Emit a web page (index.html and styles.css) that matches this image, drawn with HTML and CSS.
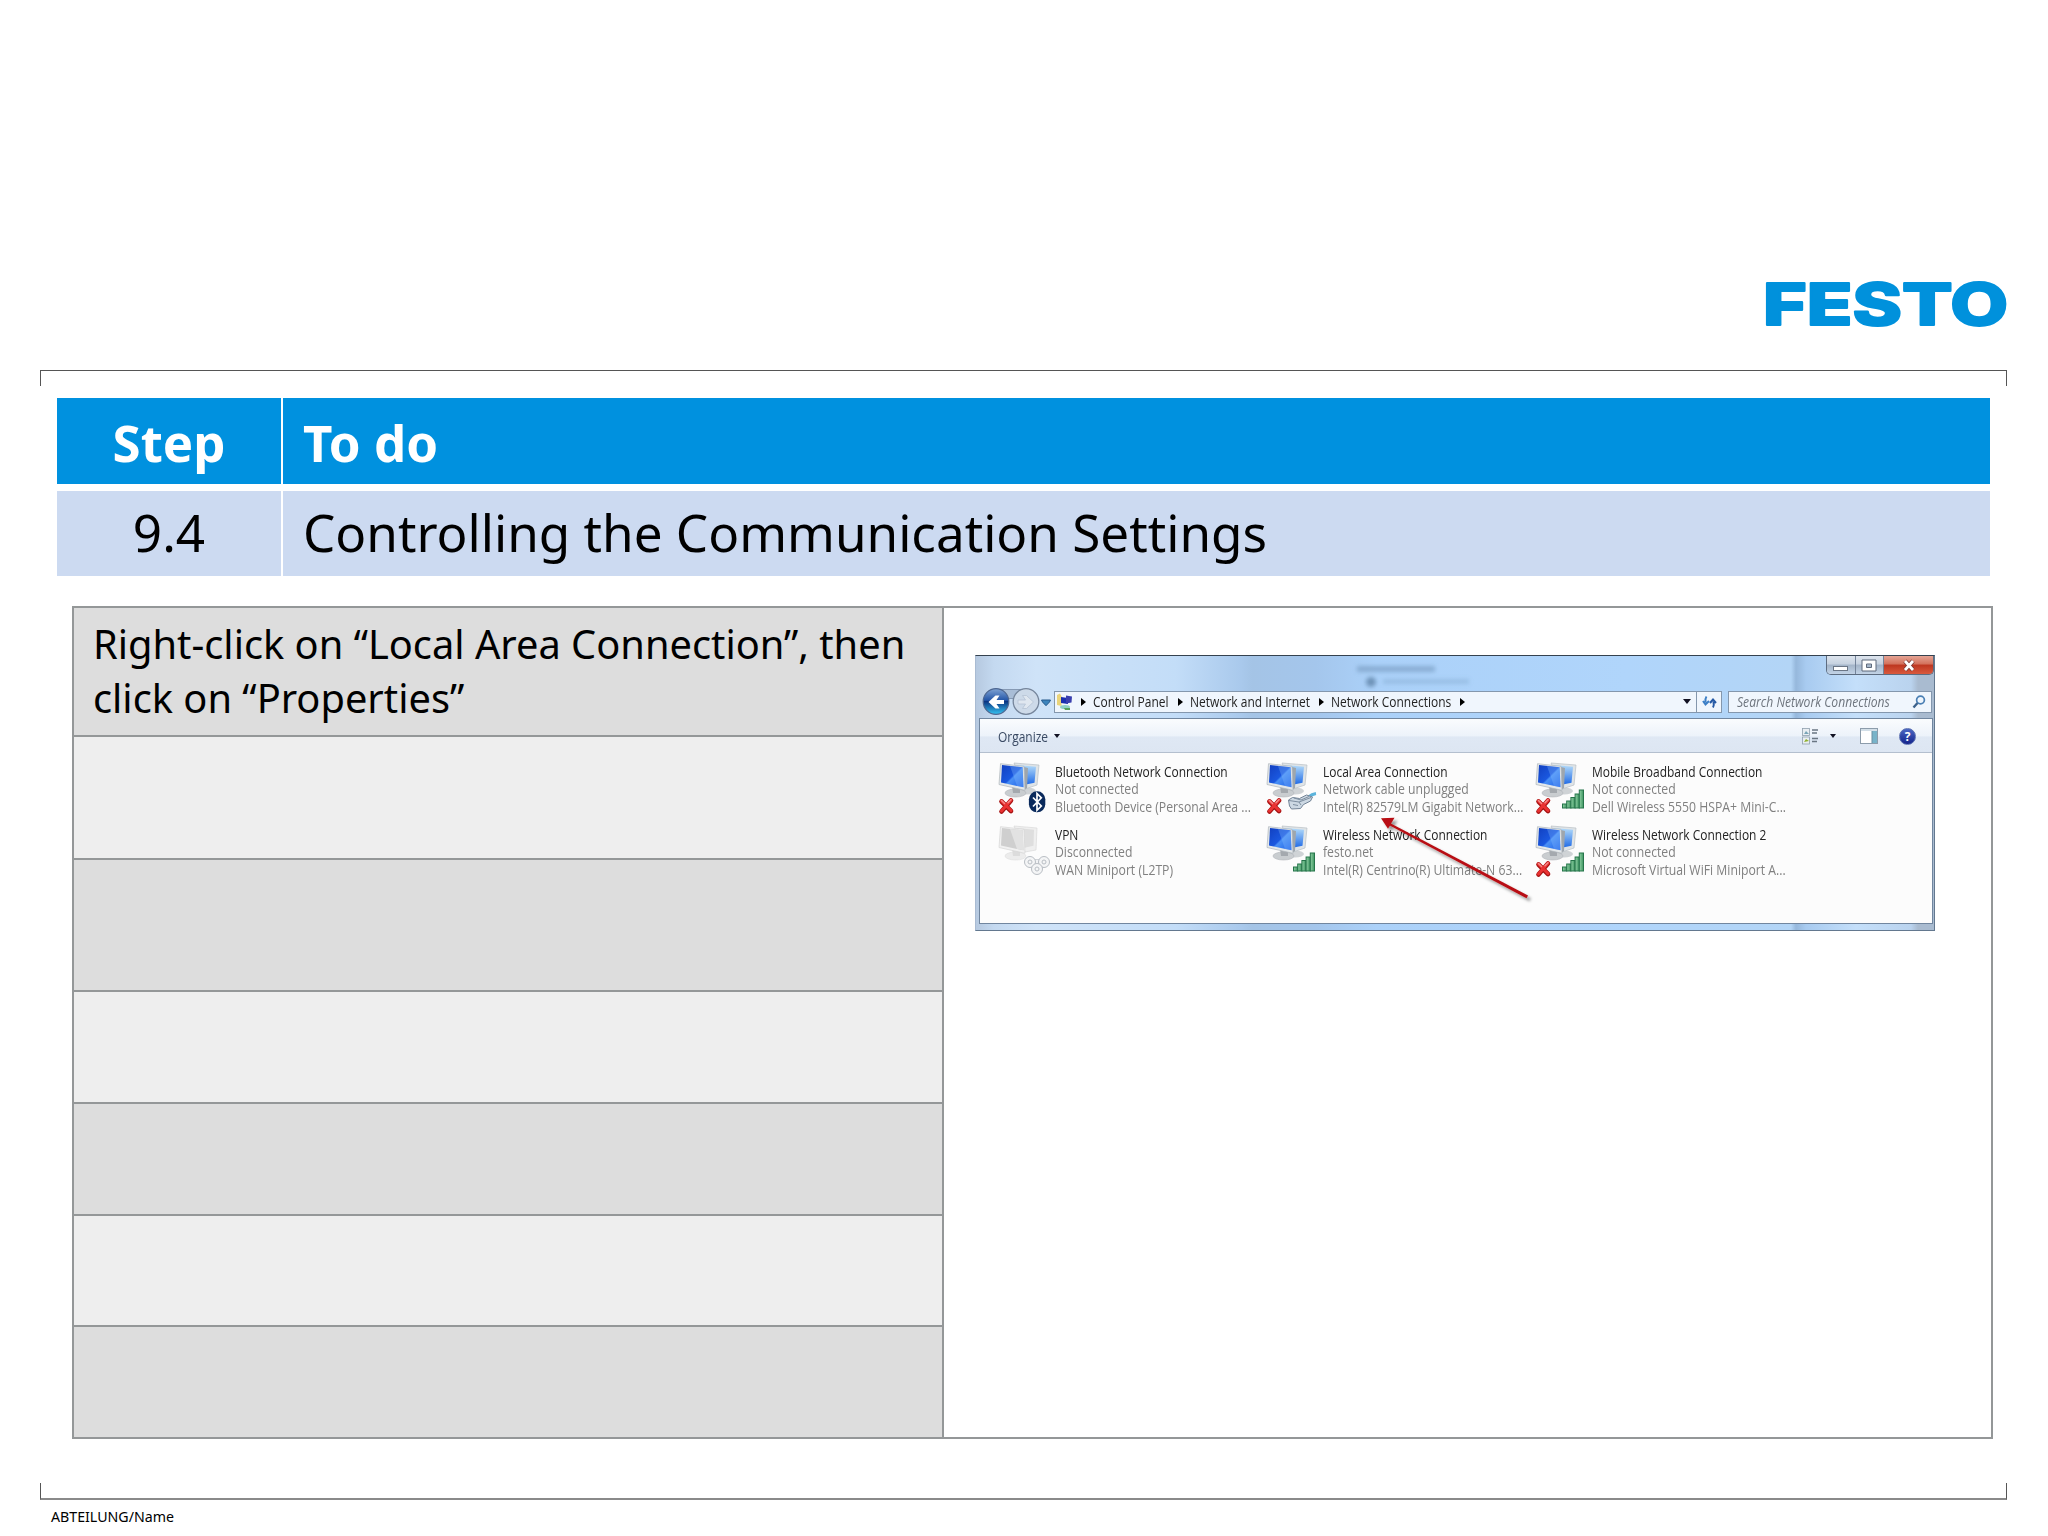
FILE: index.html
```
<!DOCTYPE html>
<html lang="en">
<head>
    <meta charset="UTF-8">
    <title>9.4 Controlling the Communication Settings</title>
    <link rel="stylesheet" href="styles.css">
</head>
<body>
    <!-- Shared icon shapes -->
    <svg class="defs" width="0" height="0">
        <defs>
            <linearGradient id="screen" x1="0" y1="0" x2="1" y2="1">
                <stop offset="0" stop-color="#1240c0"/>
                <stop offset="0.5" stop-color="#1a58e0"/>
                <stop offset="0.55" stop-color="#4a90f5"/>
                <stop offset="1" stop-color="#1c60e8"/>
            </linearGradient>
            <linearGradient id="screen-back" x1="0" y1="0" x2="0" y2="1">
                <stop offset="0" stop-color="#b4dcfa"/>
                <stop offset="1" stop-color="#1f6ae6"/>
            </linearGradient>
            <linearGradient id="back-btn" x1="0" y1="0" x2="0" y2="1">
                <stop offset="0" stop-color="#7fa3d4"/>
                <stop offset="0.45" stop-color="#2456a8"/>
                <stop offset="0.5" stop-color="#0b3582"/>
                <stop offset="1" stop-color="#35c4f2"/>
            </linearGradient>
            <linearGradient id="bar" x1="0" y1="0" x2="1" y2="0">
                <stop offset="0" stop-color="#8fd0a4"/>
                <stop offset="1" stop-color="#3d9560"/>
            </linearGradient>
            <filter id="shadow" x="-10%" y="-10%" width="120%" height="130%">
                <feDropShadow dx="3" dy="3" stdDeviation="1.6" flood-color="#000" flood-opacity="0.4"/>
            </filter>
            <filter id="glass" x="-20%" y="-50%" width="140%" height="200%">
                <feGaussianBlur stdDeviation="2"/>
            </filter>
            <symbol id="pc" viewBox="0 0 56 54">
                <ellipse cx="30" cy="30" rx="9" ry="3.5" fill="#cfd3d6"/>
                <ellipse cx="18.5" cy="32" rx="10.5" ry="4" fill="#c9cdd0" stroke="#b0b4b8" stroke-width=".6"/>
                <path d="M15 25l8 2v5h-7z" fill="#a4a9ae"/>
                <path d="M17 2l25 2-2 20-12 4z" fill="#dfe4e7" stroke="#b9c0c5" stroke-width=".7"/>
                <path d="M20 4l19 1.7-1.5 16-10 2z" fill="url(#screen-back)"/>
                <path d="M27 6l4 1-1 20-3 2z" fill="#9ea6ad"/>
                <path d="M3.500 2.700l23.500 2.600 1 24L2 23.500z" fill="#e4e8ea" stroke="#aeb5ba" stroke-width=".7"/>
                <path d="M5 4l20.700 2.300.8 20L4 21.500z" fill="url(#screen)"/>
                <path d="M13 5l12.700 1.300.8 20L20 25z" fill="#8fc3ff" opacity=".3"/>
            </symbol>
            <symbol id="pc-off" viewBox="0 0 56 54">
                <ellipse cx="18.5" cy="32" rx="10.5" ry="4" fill="#ececec" stroke="#dedede" stroke-width=".6"/>
                <path d="M15 25l8 2v5h-7z" fill="#dcdcdc"/>
                <path d="M17 2l23 2-1 22-11 2z" fill="#efefef" stroke="#dadada" stroke-width=".7"/>
                <path d="M20 4l17 1.700-.5 16-9 2z" fill="#dedede"/>
                <path d="M3.500 2.700l23.500 2.600 1 24L2 23.500z" fill="#f1f1f1" stroke="#d6d6d6" stroke-width=".7"/>
                <path d="M5 4l20.700 2.300.8 20L4 21.500z" fill="#cfcfcf"/>
                <path d="M13 5l12.700 1.300.8 20L20 25z" fill="#e2e2e2"/>
            </symbol>
            <symbol id="cross" viewBox="0 0 56 54">
                <path d="M4.500 40.500L14 50M14 39.500L4.500 50.500" stroke="#a51212" stroke-width="4.600" stroke-linecap="round"/>
                <path d="M4.500 40L14 49.500M14 39L4.500 50" stroke="#ea3232" stroke-width="3" stroke-linecap="round"/>
                <path d="M4.500 39.500l3 3M14 38.700l-3 3" stroke="#f58a8a" stroke-width="1.500" stroke-linecap="round"/>
            </symbol>
            <symbol id="signal" viewBox="0 0 56 54">
                <g fill="url(#bar)" stroke="#25744a" stroke-width="1">
                    <rect x="28.5" y="43" width="4.200" height="4"/>
                    <rect x="32.7" y="40" width="4.200" height="7"/>
                    <rect x="36.9" y="36.500" width="4.200" height="10.500"/>
                    <rect x="41.1" y="33" width="4.200" height="14"/>
                    <rect x="45.3" y="29" width="4.200" height="18"/>
                </g>
            </symbol>
            <symbol id="bluetooth" viewBox="0 0 56 54">
                <rect x="31.900" y="30.300" width="16.400" height="21" rx="8" fill="#0a2a5c"/>
                <path d="M36 36.500l8.300 8.500-4.300 4.300V32.500l4.300 4.300L36 45.500" fill="none" stroke="#fff" stroke-width="1.700"/>
            </symbol>
            <symbol id="cable" viewBox="0 0 56 54">
                <path d="M43 36.500q4-3.500 8-4" fill="none" stroke="#5cb4dc" stroke-width="3"/>
                <path d="M23.500 39l4-2.500 7 1 7-3.500 6 2-2 4-7 3.500-3 4-9 .5-2-3z" fill="#ccd8e3" stroke="#728396" stroke-width="1"/>
                <path d="M24 39.500l10 1.500 2 3M34 41l12-4.500M29 37l7 2 8-3.500M28 43.500l5 1" fill="none" stroke="#7d8ea0" stroke-width="1"/>
            </symbol>
            <symbol id="vpn" viewBox="0 0 56 54">
                <path d="M33 38h14M33 38l7 8 8-8" stroke="#c6cace" stroke-width="6" fill="none"/>
                <path d="M33 38h14M33 38l7 8 8-8" stroke="#f2f3f5" stroke-width="4.500" fill="none"/>
                <g fill="#f4f5f6" stroke="#b9bec4" stroke-width="1">
                    <circle cx="33" cy="38" r="5.500"/><circle cx="47" cy="38" r="5.500"/><circle cx="40" cy="45" r="5.500"/>
                    <circle cx="33" cy="38" r="2"/><circle cx="47" cy="38" r="2"/><circle cx="40" cy="45" r="2"/>
                </g>
            </symbol>
        </defs>
    </svg>

    <div class="slide">
        <header class="slide-header">
            <svg class="logo" width="280" height="100" viewBox="0 0 280 100">
                <text x="16" y="70" textLength="245" lengthAdjust="spacingAndGlyphs">FESTO</text>
            </svg>
        </header>

        <div class="frame frame-top"></div>

        <div class="step-table">
            <div class="cell head center">Step</div>
            <div class="cell head">To do</div>
            <div class="cell center">9.4</div>
            <div class="cell">Controlling the Communication Settings</div>
        </div>

        <div class="content">
            <div class="tasks">
                <div class="task">Right-click on “Local Area Connection”, then<br>click on “Properties”</div>
                <div class="task"></div>
                <div class="task"></div>
                <div class="task"></div>
                <div class="task"></div>
                <div class="task"></div>
                <div class="task"></div>
            </div>
            <div class="picture">
                <div class="window">
                    <div class="caption">
                        <!-- blurred content showing through the glass -->
                        <svg class="glass" width="130" height="35" viewBox="0 0 130 35">
                            <g filter="url(#glass)" fill="#5f83a8">
                                <rect x="8" y="10" width="78" height="6" opacity=".45"/>
                                <circle cx="22" cy="26" r="5" opacity=".8"/>
                                <rect x="34" y="23" width="86" height="5" opacity=".25"/>
                            </g>
                        </svg>
                        <div class="win-buttons">
                            <span class="win-btn min"><svg width="16" height="6"><rect x=".5" y=".5" width="14" height="4" fill="#fff" stroke="#6b7686"/></svg></span>
                            <span class="win-btn max"><svg width="17" height="13"><path d="M1 1h14v11H1zM5.500 5v3.500h5V5z" fill="#fff" fill-rule="evenodd" stroke="#5f6b7c"/></svg></span>
                            <span class="win-btn close"><svg width="14" height="13"><path d="M3 2l8 9M11 2L3 11" stroke="#7a3a35" stroke-width="4.400"/><path d="M3 2l8 9M11 2L3 11" stroke="#fff" stroke-width="2.800"/></svg></span>
                        </div>
                    </div>

                    <div class="nav">
                        <svg class="nav-buttons" width="79" height="30" viewBox="0 0 79 30">
                            <path d="M20 2.500h30l-8 9H28z" fill="#a9bdd6" stroke="#8599b3"/>
                            <circle cx="20" cy="14.500" r="12.800" fill="url(#back-btn)" stroke="#4d6690" stroke-width="1.200"/>
                            <path d="M28 13h-7.500l3-4.500h-4L12.500 15l7 6.500h4l-3-4.500H28z" fill="#fff"/>
                            <circle cx="50" cy="14.500" r="12.800" fill="#cddae9" stroke="#75859b" stroke-width="1.300"/>
                            <path d="M42 13h7.500l-3-4.500h4l7 6.500-7 6.500h-4l3-4.500H42z" fill="#dfe7f0" stroke="#b5c3d4" stroke-width=".8"/>
                            <path d="M65.500 13h9l-1 2-3.500 3.700L66.500 15z" fill="#3d85bd" stroke="#24598c" stroke-width="1"/>
                        </svg>
                        <div class="address">
                            <svg class="place" width="18" height="18" viewBox="0 0 18 18">
                                <path d="M0 2l3-1.500 1.500 3V13L0 12z" fill="#ead47a"/>
                                <path d="M4 4l7 1v6l-7-1z" fill="#1b2fb0"/><path d="M9 2.500l6 1-.5 6-5.500 1z" fill="#3a3fae"/>
                                <ellipse cx="8" cy="14" rx="5" ry="2" fill="#8fcfc6"/><path d="M7 15h6v2H8z" fill="#58a058"/>
                            </svg>
                            <span class="sep first"></span><span class="crumb c1">Control Panel</span>
                            <span class="sep"></span><span class="crumb c2">Network and Internet</span>
                            <span class="sep"></span><span class="crumb c3">Network Connections</span>
                            <span class="sep"></span>
                            <span class="arrow-down"></span>
                        </div>
                        <div class="refresh">
                            <svg width="15" height="14" viewBox="0 0 15 14"><path d="M4.500 1.500q-1.500 2-1 6M1 6l2.500 3.500L7 6" fill="none" stroke="#3c7fc6" stroke-width="2"/><path d="M11 12.500q1.300-2 .5-6M8 8l3-3.500L14 8" fill="none" stroke="#2559a5" stroke-width="2"/></svg>
                        </div>
                        <div class="search">
                            <span class="hint">Search Network Connections</span>
                            <svg width="14" height="14" viewBox="0 0 14 14"><circle cx="8.500" cy="5" r="3.900" fill="#eef5fc" stroke="#4a7fb4" stroke-width="1.700"/><path d="M5.500 8L1.500 12.500" stroke="#3d628c" stroke-width="2.400"/></svg>
                        </div>
                    </div>

                    <div class="pane">
                        <div class="toolbar">
                            <span class="organize">Organize</span><span class="arrow-down small"></span>
                            <svg class="view" width="18" height="17" viewBox="0 0 18 17">
                                <g fill="#e9eef2" stroke="#8fa0ad" stroke-width=".8"><rect x=".5" y=".5" width="7" height="7"/><rect x=".5" y="9" width="7" height="7"/></g>
                                <path d="M2 6l2-3 3 3z" fill="#7aa5b8"/><path d="M2 14l2-3 3 2z" fill="#8fb02a"/>
                                <path d="M10 2h6M10 5h5M10 10.500h6M10 13.500h5" stroke="#6a7682" stroke-width="1.300"/>
                            </svg>
                            <span class="arrow-down small"></span>
                            <svg class="preview" width="18" height="16" viewBox="0 0 18 16"><rect x=".5" y=".5" width="17" height="15" fill="#fff" stroke="#8c9cab"/><path d="M1 1h16v2H1z" fill="#d3dfe8"/><path d="M12 3h5v12h-5z" fill="#78b3c9"/><path d="M12 3v12" stroke="#6b8fa3"/></svg>
                            <span class="help">?</span>
                        </div>
                        <div class="connections">
                            <div class="item">
                                <svg width="56" height="54"><use href="#pc"/><use href="#cross"/><use href="#bluetooth"/></svg>
                                <div class="info"><p class="name">Bluetooth Network Connection</p><p>Not connected</p><p>Bluetooth Device (Personal Area ...</p></div>
                            </div>
                            <div class="item">
                                <svg width="56" height="54"><use href="#pc"/><use href="#cross"/><use href="#cable"/></svg>
                                <div class="info"><p class="name">Local Area Connection</p><p>Network cable unplugged</p><p>Intel(R) 82579LM Gigabit Network...</p></div>
                            </div>
                            <div class="item">
                                <svg width="56" height="54"><use href="#pc"/><use href="#cross"/><use href="#signal"/></svg>
                                <div class="info"><p class="name">Mobile Broadband Connection</p><p>Not connected</p><p>Dell Wireless 5550 HSPA+ Mini-C...</p></div>
                            </div>
                            <div class="item">
                                <svg width="56" height="54"><use href="#pc-off"/><use href="#vpn"/></svg>
                                <div class="info"><p class="name">VPN</p><p>Disconnected</p><p>WAN Miniport (L2TP)</p></div>
                            </div>
                            <div class="item">
                                <svg width="56" height="54"><use href="#pc"/><use href="#signal"/></svg>
                                <div class="info"><p class="name">Wireless Network Connection</p><p>festo.net</p><p>Intel(R) Centrino(R) Ultimate-N 63...</p></div>
                            </div>
                            <div class="item">
                                <svg width="56" height="54"><use href="#pc"/><use href="#cross"/><use href="#signal"/></svg>
                                <div class="info"><p class="name">Wireless Network Connection 2</p><p>Not connected</p><p>Microsoft Virtual WiFi Miniport A...</p></div>
                            </div>
                        </div>
                    </div>

                    <!-- Red pointer over the Local Area Connection entry -->
                    <svg class="pointer" width="160" height="95" viewBox="0 0 160 95">
                        <g filter="url(#shadow)" fill="#b80f12">
                            <path d="M9 7l140 73.500-1.500 2.700L8 9z"/>
                            <path d="M2 3.300l13.500-.5-6.500 11z"/>
                        </g>
                    </svg>
                </div>
            </div>
        </div>

        <div class="frame frame-bottom"></div>
        <footer>ABTEILUNG/Name</footer>
    </div>
</body>
</html>
```
FILE: styles.css
```
* {
    box-sizing: border-box;
}

body {
    margin: 0;
    background: #fff;
    color: #000;
    font-family: "Noto Sans", "Open Sans", sans-serif;
}

.defs {
    position: absolute;
}

.slide {
    width: 2048px;
    height: 1536px;
    overflow: hidden;
}

.slide-header {
    display: flex;
    justify-content: flex-end;
    height: 370px;
    padding: 255px 21px 0 0;
}

.logo text {
    font-family: Inter, "Liberation Sans", sans-serif;
    font-weight: 800;
    font-size: 57.5px;
    fill: #0091dc;
    stroke: #0091dc;
    stroke-width: 2px;
    stroke-linejoin: round;
}

.frame {
    height: 16px;
    margin: 0 41px 0 40px;
    border: 1px solid #555;
}

.frame-top {
    border-bottom: 0;
}

.frame-bottom {
    height: 17px;
    margin-top: 44px;
    border-top: 0;
    border-bottom: 2px solid #8a8a8a;
}

/* Step / To do */
.step-table {
    display: grid;
    grid-template-columns: 224px 1fr;
    grid-template-rows: 86px 85px;
    gap: 7px 2px;
    margin: 12px 58px 0 57px;
}

.cell {
    padding: 0 20px;
    background: #ccdaf1;
    font-size: 51.2px;
    line-height: 83px;
    white-space: nowrap;
}

.cell.head {
    background: #0091df;
    color: #fff;
    font-size: 51px;
    font-weight: 700;
    line-height: 88px;
}

.center {
    text-align: center;
}

/* Task list and picture */
.content {
    display: grid;
    grid-template-columns: 870px 1fr;
    width: 1921px;
    height: 833px;
    margin: 30px 0 0 72px;
    border: 2px solid #949798;
}

.tasks {
    display: grid;
    grid-template-rows: 129px 123px 132px 112px 112px 111px 1fr;
    border-right: 2px solid #949798;
}

.task {
    padding: 9px 19px 0;
    border-bottom: 2px solid #949798;
    background: #eee;
    font-size: 39.8px;
    line-height: 54.4px;
    white-space: nowrap;
}

.task:nth-child(odd) {
    background: #ddd;
}

.task:last-child {
    border-bottom: 0;
}

.picture {
    padding: 47px 0 0 31px;
}

/* Explorer window */
.window {
    position: relative;
    width: 960px;
    height: 276px;
    border: 1px solid #63788f;
    border-top-color: #35424f;
    border-left-color: #a9bbd2;
    background: linear-gradient(90deg, #b6c9e0 0, #c4d9f0 18px, #cfe3f8 60px, #c3ddf8 200px, #a9c9ec 265px, #a4c4e6 276px, #a4c6ec 340px, #abd1f9 400px, #b0d5fb 650px, #b3d5f6 815px, #96b8dc 820px, #a8cbf0 830px, #c4dffa 880px, #bad3ee 935px, #a9bbd0 942px);
    font-family: "Open Sans", "Noto Sans", sans-serif;
    font-size: 14px;
    color: #222;
}

.caption {
    display: flex;
    justify-content: space-between;
    height: 35px;
    padding-left: 373px;
}

.win-buttons {
    display: flex;
    width: 108px;
    height: 19px;
    border: 1px solid #5d6c80;
    border-top: 0;
    border-radius: 0 0 5px 5px;
    overflow: hidden;
}

.win-btn {
    display: flex;
    align-items: center;
    justify-content: center;
    width: 29px;
    border-right: 1px solid #74849a;
    background: linear-gradient(#dde4ed 0, #c6d2e0 45%, #a3b4c8 50%, #c2d3e6 100%);
}

.win-btn.min {
    padding-top: 7px;
}

.win-btn.max {
    width: 28px;
}

.win-btn.close {
    flex: 1;
    border-right: 0;
    background: linear-gradient(#e5a595 0, #d3705b 45%, #bd3620 50%, #d9593d 100%);
}

.nav {
    display: flex;
    align-items: center;
    height: 21px;
}

.nav-buttons {
    flex: none;
    margin-right: -1px;
}

.address,
.refresh,
.search {
    display: flex;
    align-items: center;
    flex: none;
    height: 22px;
    border: 1px solid #8497ad;
    background: #f0f6fd;
    white-space: nowrap;
}

.address {
    width: 643px;
    padding-left: 2px;
}

/* The window font is narrower than Open Sans */
.crumb,
.hint,
.organize,
.item p {
    transform: scaleX(.855);
    transform-origin: 0 50%;
}

.c1 {
    width: 76px;
}

.c2,
.c3 {
    width: 120px;
}

.sep {
    flex: none;
    margin: 0 7px 0 9px;
    border-left: 5px solid #000;
    border-top: 4px solid transparent;
    border-bottom: 4px solid transparent;
}

.sep.first {
    margin-left: 6px;
}

.arrow-down {
    margin: 0 5px 0 auto;
    border-top: 5px solid #112;
    border-left: 4px solid transparent;
    border-right: 4px solid transparent;
}

.refresh {
    justify-content: center;
    width: 25px;
    border-left: 0;
}

.search {
    justify-content: space-between;
    width: 204px;
    margin-left: 6px;
    padding: 0 5px 0 8px;
    color: #6d747d;
    font-style: italic;
}

.hint {
    width: 160px;
    transform: scaleX(.865);
}

.pane {
    width: 954px;
    height: 206px;
    margin: 6px 0 0 3px;
    border: 1px solid #71869f;
    background: #fcfcfc;
}

.toolbar {
    display: flex;
    align-items: center;
    height: 34px;
    padding: 1px 16px 0 18px;
    border-bottom: 1px solid #b4bfce;
    background: linear-gradient(#fafcfe 0, #edf3fa 50%, #dfe8f4 55%, #dde6f2 100%);
    color: #3a4a63;
}

.organize {
    width: 50px;
}

.arrow-down.small {
    margin: 0 0 0 6px;
    border-width: 4px 3.5px 0;
}

.view {
    margin-left: auto;
}

.view + .arrow-down.small {
    margin-left: 10px;
}

.preview {
    margin: 0 21px 0 24px;
}

.help {
    width: 17px;
    height: 17px;
    border: 1px solid #5a6fb0;
    border-radius: 50%;
    background: linear-gradient(#4a66c4, #14248c);
    color: #fff;
    font-weight: 700;
    font-size: 12px;
    line-height: 15px;
    text-align: center;
}

.connections {
    display: grid;
    grid-template-columns: repeat(3, 268.3px);
    grid-auto-rows: 63px;
    padding: 8px 0 0 17px;
}

.item {
    display: flex;
    white-space: nowrap;
}

.item svg {
    flex: none;
    margin-right: 2px;
}

.info {
    padding-top: 1.5px;
}

.item p {
    margin: 0;
    line-height: 17.8px;
    color: #808080;
    transform: scaleX(.873);
}

.item .name {
    color: #222;
    transform: scaleX(.855);
}

.pointer {
    position: absolute;
    left: 403px;
    top: 159px;
}

footer {
    padding: 7px 0 0 51px;
    font-size: 14.2px;
    line-height: 20px;
}
```
